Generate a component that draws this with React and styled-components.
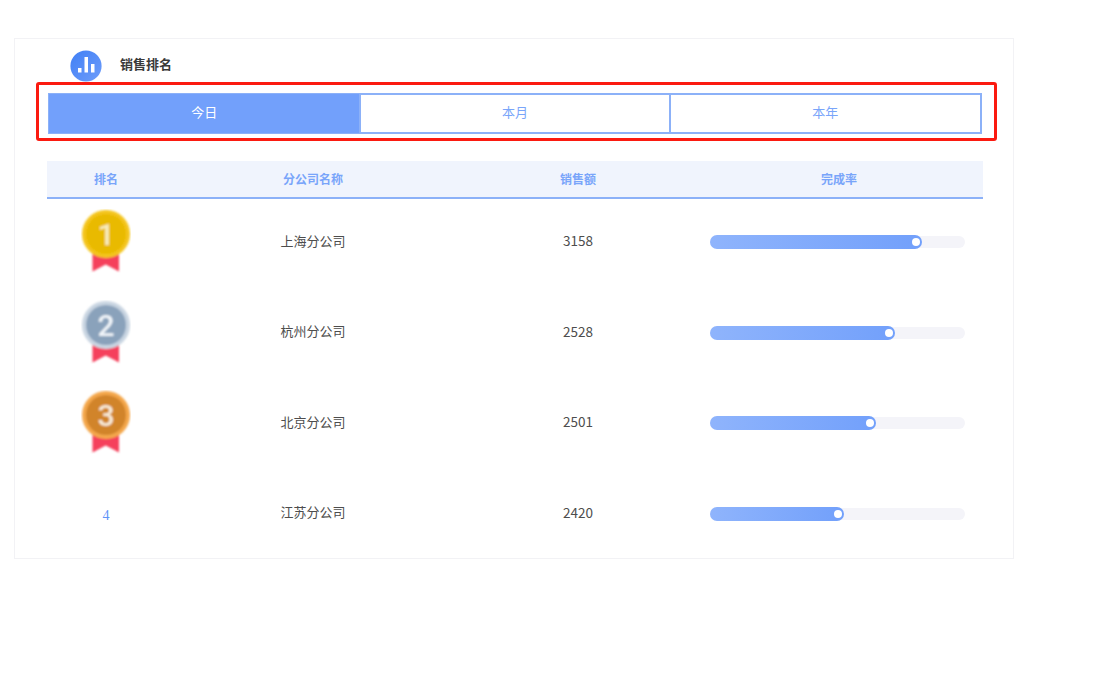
import styled, { createGlobalStyle } from 'styled-components';

const GlobalStyle = createGlobalStyle`
    body {
        margin: 0;
        background: #fff;
        font-family: "Noto Sans CJK SC", "Liberation Sans", sans-serif;
    }
`;

const medals = {
    1: { outer: '#f4c51c', inner: '#e9ba06', text: '#f8edc0' },
    2: { outer: '#c9d5e2', inner: '#8aa2bb', text: '#f1f5f9' },
    3: { outer: '#f4a74c', inner: '#d1842c', text: '#f8ebd9' },
};

const rows = [
    { rank: 1, name: '上海分公司', sales: 3158, fill: 212 },
    { rank: 2, name: '杭州分公司', sales: 2528, fill: 185 },
    { rank: 3, name: '北京分公司', sales: 2501, fill: 166 },
    { rank: 4, name: '江苏分公司', sales: 2420, fill: 134 },
];

const tabs = ['今日', '本月', '本年'];
const columns = '118px 296px 234px 288px';

const Card = styled.div`
    box-sizing: border-box;
    width: 1000px;
    height: 521px;
    margin: 38px 0 0 14px;
    border: 1px solid #f2f2f5;
`;

const Header = styled.div`
    display: flex;
    align-items: flex-start;
    gap: 18px;
    height: 43px;
    padding: 11px 0 0 55px;
    box-sizing: border-box;
`;

const Title = styled.div`
    font-size: 13px;
    font-weight: 700;
    line-height: 30px;
    color: #3a3a3a;
    margin-top: -1px;
`;

const Highlight = styled.div`
    box-sizing: border-box;
    width: 961px;
    height: 59px;
    margin-left: 21px;
    padding: 8px 0 0 9px;
    border: 3px solid #fb1a10;
    border-radius: 3px;
`;

const Tabs = styled.div`
    display: grid;
    grid-template-columns: repeat(3, 1fr);
    width: 934px;
    height: 41px;
`;

const Tab = styled.div`
    display: flex;
    align-items: center;
    justify-content: center;
    box-sizing: border-box;
    padding-bottom: 5px;
    border: ${(p) => (p.$active ? 1 : 2)}px solid #8cb1f8;
    border-left-width: ${(p) => (p.$last ? 0 : p.$active ? 1 : 2)}px;
    border-right-width: ${(p) => (p.$active ? 0 : 2)}px;
    background: ${(p) => (p.$active ? '#72a0fb' : '#fff')};
    color: ${(p) => (p.$active ? '#fff' : '#79a5fa')};
    font-size: 13px;
`;

const Table = styled.div`
    width: 936px;
    margin: 20px 0 0 32px;
`;

const HeadRow = styled.div`
    display: grid;
    grid-template-columns: ${columns};
    align-items: center;
    box-sizing: border-box;
    height: 38px;
    padding-bottom: 2px;
    background: #f0f4fd;
    border-bottom: 2px solid #8cb1f8;
    color: #79a5fa;
    font-size: 12px;
    font-weight: 700;
    text-align: center;
`;

const BodyRows = styled.div`
    display: flex;
    flex-direction: column;
    gap: 4.67px;
`;

const Row = styled.div`
    display: grid;
    grid-template-columns: ${columns};
    align-items: center;
    height: 86px;
    color: #4d4d4d;
    font-size: 13px;
    text-align: center;
`;

const Cell = styled.div`
    margin-top: -4px;
`;

const SalesCell = styled(Cell)`
    font-size: 13.5px;
`;

const RankCell = styled.div`
    display: flex;
    justify-content: center;
    margin-top: -2px;
`;

const RankNumber = styled.span`
    margin-top: 6px;
    color: #5f95f8;
    font-family: "Liberation Serif", serif;
    font-size: 14px;
`;

const Track = styled.div`
    width: 255px;
    height: 12px;
    margin-left: 15px;
    border-radius: 6px;
    background: #f4f4f9;
    display: flex;
    align-items: center;
`;

const Fill = styled.div`
    position: relative;
    box-sizing: border-box;
    height: 14px;
    border-radius: 7px;
    background: linear-gradient(90deg, #8fb4fc, #72a0fb);
`;

const Knob = styled.span`
    position: absolute;
    top: 3px;
    right: 2px;
    width: 8px;
    height: 8px;
    border-radius: 50%;
    background: #fff;
`;

const ChartIcon = () => (
    <svg width="32" height="32" viewBox="0 0 32 32">
        <defs>
            <linearGradient id="iconBg" x1="0" y1="0" x2="1" y2="1">
                <stop offset="0" stopColor="#3f7ff5" />
                <stop offset="1" stopColor="#6f9dfa" />
            </linearGradient>
            <filter id="iconSoft" x="-10%" y="-10%" width="120%" height="120%">
                <feGaussianBlur stdDeviation="0.4" />
            </filter>
        </defs>
        <g filter="url(#iconSoft)">
            <circle cx="16" cy="16" r="15.6" fill="url(#iconBg)" />
            <rect x="8" y="18" width="3.5" height="4.5" fill="#fff" />
            <rect x="14.5" y="7" width="3.5" height="15.5" fill="#fff" />
            <rect x="21" y="14" width="3.5" height="8.5" fill="#fff" />
        </g>
    </svg>
);

const Medal = ({ rank }) => {
    const c = medals[rank];
    return (
        <svg width="50" height="64" viewBox="0 0 50 64">
            <defs>
                <filter id={`soft${rank}`} x="-10%" y="-10%" width="120%" height="120%">
                    <feGaussianBlur stdDeviation="0.8" />
                </filter>
            </defs>
            <g filter={`url(#soft${rank})`}>
                <path d="M11.5 40 H38 V62.5 L24.7 55.5 L11.5 62.5 Z" fill="#f5405c" />
                <circle cx="25" cy="25" r="24" fill={c.outer} />
                <circle cx="25" cy="25" r="20" fill={c.inner} />
                <text
                    x="25"
                    y="35.5"
                    textAnchor="middle"
                    fontFamily="Roboto, sans-serif"
                    fontSize="30"
                    fontWeight="500"
                    fill={c.text}
                >
                    {rank}
                </text>
            </g>
        </svg>
    );
};

const App = () => {
    return (
        <>
            <GlobalStyle />
            <Card>
                <Header>
                    <ChartIcon />
                    <Title>销售排名</Title>
                </Header>
                <Highlight>
                    <Tabs>
                        {tabs.map((tab, i) => (
                            <Tab key={tab} $active={i === 0} $last={i === 2}>{tab}</Tab>
                        ))}
                    </Tabs>
                </Highlight>
                <Table>
                    <HeadRow>
                        <div>排名</div>
                        <div>分公司名称</div>
                        <div>销售额</div>
                        <div>完成率</div>
                    </HeadRow>
                    <BodyRows>
                        {rows.map((row) => (
                            <Row key={row.rank}>
                                <RankCell>
                                    {medals[row.rank] ? <Medal rank={row.rank} /> : <RankNumber>{row.rank}</RankNumber>}
                                </RankCell>
                                <Cell>{row.name}</Cell>
                                <SalesCell>{row.sales}</SalesCell>
                                <Track>
                                    <Fill style={{ width: row.fill }}>
                                        <Knob />
                                    </Fill>
                                </Track>
                            </Row>
                        ))}
                    </BodyRows>
                </Table>
            </Card>
        </>
    );
};

export default App;
